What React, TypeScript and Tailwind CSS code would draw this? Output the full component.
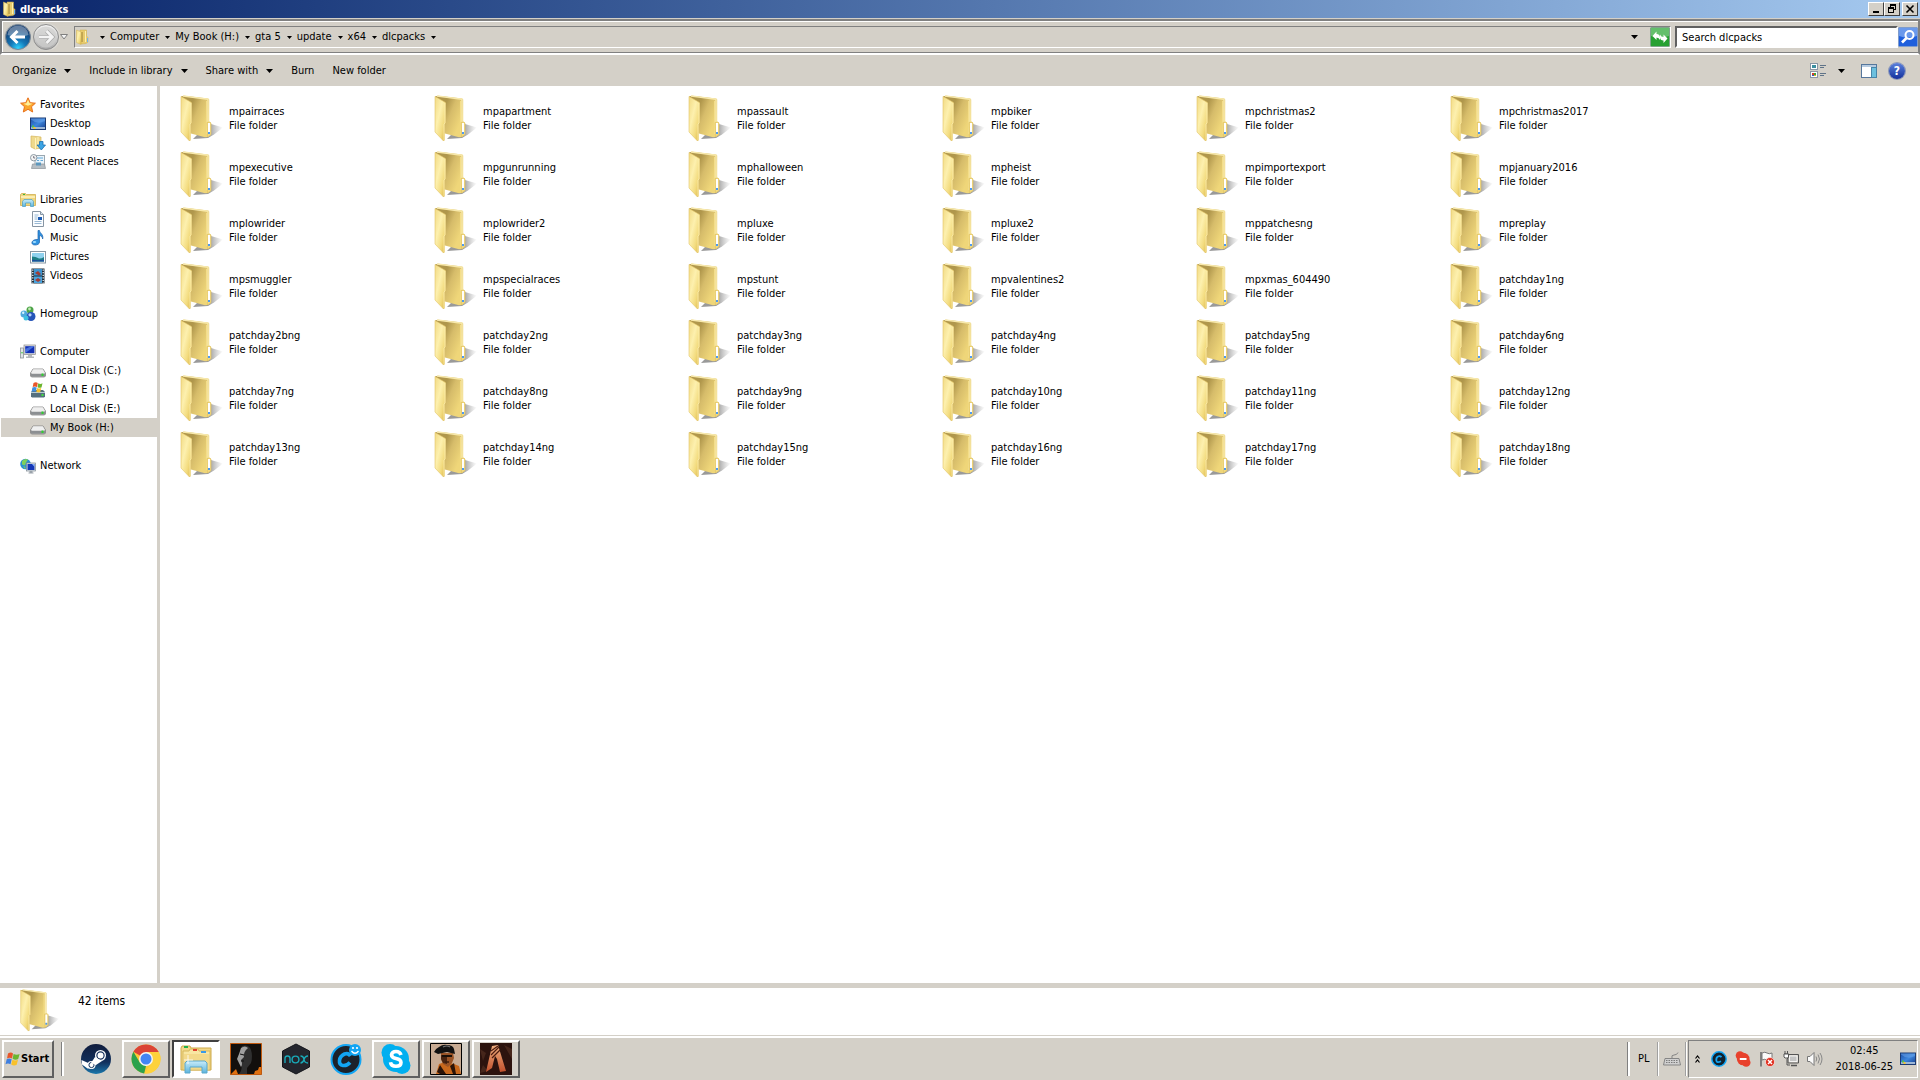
import type { ReactNode } from 'react';

interface NavItem {
  label: string;
  icon: ReactNode;
  active?: boolean;
}

interface NavGroup {
  title: string;
  icon: ReactNode;
  items: NavItem[];
}

const RAISED =
  'border-2 border-t-white border-l-white border-r-[#606060] border-b-[#606060] bg-[#d4d0c8]';

const folders = [
  'mpairraces', 'mpapartment', 'mpassault', 'mpbiker', 'mpchristmas2', 'mpchristmas2017',
  'mpexecutive', 'mpgunrunning', 'mphalloween', 'mpheist', 'mpimportexport', 'mpjanuary2016',
  'mplowrider', 'mplowrider2', 'mpluxe', 'mpluxe2', 'mppatchesng', 'mpreplay',
  'mpsmuggler', 'mpspecialraces', 'mpstunt', 'mpvalentines2', 'mpxmas_604490', 'patchday1ng',
  'patchday2bng', 'patchday2ng', 'patchday3ng', 'patchday4ng', 'patchday5ng', 'patchday6ng',
  'patchday7ng', 'patchday8ng', 'patchday9ng', 'patchday10ng', 'patchday11ng', 'patchday12ng',
  'patchday13ng', 'patchday14ng', 'patchday15ng', 'patchday16ng', 'patchday17ng', 'patchday18ng',
];

const crumbs = ['Computer', 'My Book (H:)', 'gta 5', 'update', 'x64', 'dlcpacks'];

// Gradients shared by all the icons below
function IconDefs() {
  return (
    <svg className="absolute h-0 w-0" aria-hidden="true">
      <defs>
        <linearGradient id="flap" x1="0" y1="0" x2="1" y2="1">
          <stop offset="0" stopColor="#f1da84" />
          <stop offset=".4" stopColor="#fdf0ae" />
          <stop offset=".7" stopColor="#f3dc80" />
          <stop offset="1" stopColor="#dcb646" />
        </linearGradient>
        <linearGradient id="inside" gradientUnits="userSpaceOnUse" x1="13" y1="14" x2="32" y2="22">
          <stop offset="0" stopColor="#b0974c" />
          <stop offset=".4" stopColor="#d6bc6a" />
          <stop offset="1" stopColor="#efd679" />
        </linearGradient>
        <linearGradient id="shade" gradientUnits="userSpaceOnUse" x1="32" y1="36" x2="46" y2="36">
          <stop offset="0" stopColor="#808080" stopOpacity=".8" />
          <stop offset="1" stopColor="#a0a0a0" stopOpacity="0" />
        </linearGradient>
        <radialGradient id="back" cx=".5" cy=".95" r=".8">
          <stop offset="0" stopColor="#2fd3ff" />
          <stop offset=".4" stopColor="#1478b8" />
          <stop offset="1" stopColor="#143e72" />
        </radialGradient>
        <linearGradient id="silver" x1="0" y1="0" x2="0" y2="1">
          <stop offset="0" stopColor="#f4f4f4" />
          <stop offset=".5" stopColor="#d2d2d2" />
          <stop offset="1" stopColor="#a8a8a8" />
        </linearGradient>
        <linearGradient id="screen" x1="0" y1="0" x2="1" y2="1">
          <stop offset="0" stopColor="#1c4fa8" />
          <stop offset=".5" stopColor="#3d86dd" />
          <stop offset="1" stopColor="#143a88" />
        </linearGradient>
        <linearGradient id="steam" x1="0" y1="0" x2="0" y2="1">
          <stop offset="0" stopColor="#101c3c" />
          <stop offset=".6" stopColor="#12305c" />
          <stop offset="1" stopColor="#1b78ad" />
        </linearGradient>
        <linearGradient id="glass" x1="0" y1="0" x2="0" y2="1">
          <stop offset="0" stopColor="#c8ecfa" />
          <stop offset="1" stopColor="#5cb4dc" />
        </linearGradient>
        <linearGradient id="ember" x1="0" y1="0" x2="0" y2="1">
          <stop offset="0" stopColor="#f0b080" />
          <stop offset="1" stopColor="#c0502c" />
        </linearGradient>
      </defs>
    </svg>
  );
}

function FolderIcon({ className }: { className: string }) {
  return (
    <svg className={className} viewBox="0 0 48 48" aria-hidden="true">
      <path d="M34 30l12 3.500-9 7-6 3.500-15 1 6-6z" fill="url(#shade)" />
      <path d="M4 2.500l3-.7L31 4.500l1.200 1v22l1.500 1.500v12L31 43l-3 .3-15-4z" fill="url(#inside)" />
      <path d="M6 2l25 3.200v23" fill="none" stroke="#f8e9ac" strokeWidth="1.400" />
      <path d="M29.500 7v33" stroke="#f4de8a" strokeWidth="1" />
      <path d="M30 28.500l3-.5 1 1v11.500l-3.500 2.500z" fill="#f1d984" stroke="#dfc15e" strokeWidth=".6" />
      <rect x="31" y="29" width="2" height="9" fill="#fff" />
      <rect x="31" y="38" width="2" height="2" fill="#4d9af0" />
      <path d="M4 2.500l10.500 6v20.500l-1 1V46l-1 1L4 38z" fill="url(#flap)" stroke="#e3c566" strokeWidth=".6" />
      <path d="M14 9v20l-1 1v16" fill="none" stroke="#fff3bc" strokeWidth=".7" />
    </svg>
  );
}

function SmallFolder() {
  return (
    <svg className="size-4 shrink-0" viewBox="0 0 16 16" aria-hidden="true">
      <path d="M5 1h6.500v6l1.500 1.500V13l-2 1.500L6 15z" fill="#e8cb6c" stroke="#cfae4c" strokeWidth=".5" />
      <path d="M7 3v10" stroke="#b4984a" strokeWidth="1.500" />
      <path d="M10.500 2v11" stroke="#fff0ae" strokeWidth="1" />
      <path d="M12.500 9v4" stroke="#6db3ee" strokeWidth="1" />
      <path d="M1.500 1L6 3v12.500l-4.500-2z" fill="url(#flap)" stroke="#d7b652" strokeWidth=".5" />
    </svg>
  );
}

function Icon16({ children }: { children: ReactNode }) {
  return (
    <svg className="size-4 shrink-0" viewBox="0 0 16 16" aria-hidden="true">
      {children}
    </svg>
  );
}

const DriveIcon = (
  <Icon16>
    <path d="M3 6h10l2.500 4v3l-1 1h-13l-1-1v-3z" fill="#b8b8b8" stroke="#777" strokeWidth=".7" />
    <path d="M3.200 6.300h9.600L15 10H1z" fill="#efefef" />
    <rect x="1" y="10" width="14" height="3.500" rx=".8" fill="#8c8f92" />
    <path d="M1.500 10.500h13" stroke="#d8d8d8" />
    <rect x="11.500" y="10.500" width="2" height="2.500" fill="#2fd02f" />
  </Icon16>
);

const WindowsDriveIcon = (
  <Icon16>
    <path d="M1 10l2-2h10l2 2v4.500l-1 1H2l-1-1z" fill="#55707e" />
    <path d="M1 10.500h14" stroke="#b7cbd3" />
    <rect x="11.500" y="12" width="2" height="2" fill="#3fe03f" />
    <path d="M3.500 1q2.500-1.500 4.300 0L7 5q-2.200-1.200-4.300 0z" fill="#e8562a" />
    <path d="M8.300 1.300q2 1.200 4.200 0L11.500 5.400q-2 1-4-.2z" fill="#6bb52e" />
    <path d="M2.400 5.600q2.200-1.300 4.300 0l-.8 4q-2.200-1-4.300.2z" fill="#3f8fe0" />
    <path d="M7.200 5.900q2 1.200 4 .2l-.9 4q-2 .8-4-.4z" fill="#f8c12c" />
  </Icon16>
);

const DesktopIcon = (
  <Icon16>
    <rect x=".5" y="2" width="15" height="11.500" fill="url(#screen)" stroke="#1b3a73" />
    <path d="M1 3.500Q7 9 15 5V2.500H1z" fill="#6ea8ec" opacity=".5" />
    <rect x="1" y="11" width="14" height="2" fill="#9db7d6" />
    <rect x="2" y="9.500" width="2" height="2" fill="#4fc04a" />
    <rect x="3.500" y="11" width="2" height="2" fill="#f4c430" />
  </Icon16>
);

const FavoritesIcon = (
  <Icon16>
    <path d="M8 .8l2.200 4.900 5.200.5-3.900 3.500 1.200 5.300L8 12.300 3.300 15l1.200-5.300L.6 6.200l5.200-.5z" fill="#fba62c" stroke="#e8711c" />
    <path d="M8 2.800l1.600 3.500 3 .4-4.600 2-4.600-2 3-.4z" fill="#fff09a" />
  </Icon16>
);

const DownloadsIcon = (
  <Icon16>
    <path d="M1 1l10 1v11l-6 1-4-2z" fill="#efd98c" stroke="#d5b65c" strokeWidth=".7" />
    <path d="M5.500 3v11M8 2v11" stroke="#fff3bd" />
    <path d="M9.500 6.500h3.500V10h2.500l-4.200 5L7 10h2.500z" fill="#3ba4e4" stroke="#1c6eb0" strokeWidth=".8" />
  </Icon16>
);

const RecentIcon = (
  <Icon16>
    <rect x="5" y="1.500" width="9.500" height="10" fill="#eaf4fb" stroke="#9aa7b0" />
    <path d="M7 4h6M7 6.500h2M10.500 6.500h2.500" stroke="#62a8d8" />
    <path d="M2.500 10h12l1 4.500H1.500z" fill="#b6bec4" stroke="#8c9399" strokeWidth=".7" />
    <rect x="6" y="8.500" width="5" height="3" fill="#5c97bd" />
    <circle cx="3.700" cy="3.700" r="3.200" fill="#f5f5f5" stroke="#8e9aa3" />
    <path d="M3.700 2v2h1.500" fill="none" stroke="#556" strokeWidth=".8" />
  </Icon16>
);

const LibrariesIcon = (
  <Icon16>
    <path d="M.5 2.500l1-1h4l1 1h9v11H.5z" fill="#f0d67e" stroke="#cfae4f" strokeWidth=".8" />
    <path d="M1 5h14" stroke="#fff4c4" strokeWidth="1.500" />
    <rect x="3" y="2" width="2" height="1" fill="#3eb53e" />
    <path d="M2.500 14.500V9.500l1.500-2h8l1.500 2v5h-3v-3.500h-5v3.500z" fill="url(#glass)" stroke="#4a9dc4" strokeWidth=".7" />
  </Icon16>
);

const DocumentsIcon = (
  <Icon16>
    <path d="M2.500.5h8l3 3v12h-11z" fill="#fbfdff" stroke="#8795a3" />
    <path d="M10.500.5v3h3" fill="#d7e3ee" stroke="#8795a3" />
    <path d="M4.500 4h4M4.500 6h3M4.500 8h3M4.500 10.500h7M4.500 12.500h7" stroke="#7fa6c9" strokeWidth=".8" />
    <rect x="8" y="6" width="4" height="3" fill="#1c5cb4" />
  </Icon16>
);

const MusicIcon = (
  <Icon16>
    <path d="M8 .5h1.500c.3 3 4.200 3.500 3.200 8.500C12.200 6.500 11 5.800 9.500 5.500V12c0 2-2 3-4.500 3S1.500 13.500 2 12s3-3 6-2.500z" fill="#2f92e0" stroke="#1b62ac" strokeWidth=".7" />
    <ellipse cx="4.500" cy="12" rx="1.800" ry="1" fill="#9fdcff" />
  </Icon16>
);

const PicturesIcon = (
  <Icon16>
    <rect x=".5" y="2.500" width="15" height="11.500" fill="#fff" stroke="#8997a3" />
    <rect x="2" y="4" width="12" height="8.500" fill="#8fd1ee" />
    <path d="M2 7.500q4 0 6 1.500t6-1v4.500H2z" fill="#1d7f85" />
    <path d="M2 10.500q6 1.500 12 0v2H2z" fill="#1c4f9c" />
  </Icon16>
);

const VideosIcon = (
  <Icon16>
    <rect x="1.500" y=".5" width="13" height="15" fill="#20303c" />
    <rect x="4" y="1" width="8" height="6.500" fill="#3c93d0" />
    <rect x="4" y="8.500" width="8" height="6.500" fill="#4aa4de" />
    <path d="M5 5l3-2 3 3-2 1.500zM5 12l3-2 3 2-3 2z" fill="#a13c34" />
    <path d="M2.800 1.500v14M13.200 1.500v14" stroke="#fff" strokeWidth="1.200" strokeDasharray="1.200 1.400" />
  </Icon16>
);

const HomegroupIcon = (
  <Icon16>
    <circle cx="4" cy="8" r="3.500" fill="#4fa9dc" />
    <circle cx="10" cy="4" r="3.500" fill="#4da348" />
    <circle cx="11" cy="10.500" r="4.500" fill="#2554b8" />
    <circle cx="6" cy="12" r="2.500" fill="#3ec0e0" />
    <circle cx="9.500" cy="3" r="1.400" fill="#c1ecb4" />
    <circle cx="10" cy="8.800" r="1.600" fill="#b4d2fb" />
    <circle cx="3.200" cy="6.800" r="1.200" fill="#d4f2ff" />
  </Icon16>
);

const ComputerIcon = (
  <Icon16>
    <rect x=".5" y="4" width="3" height="10" fill="#dfe3e6" stroke="#8c9399" strokeWidth=".8" />
    <rect x="1.300" y="8" width="1.400" height="1.400" fill="#4cd04c" />
    <rect x="4" y="1" width="11.500" height="9.500" fill="#e3e3e3" stroke="#8c8c8c" strokeWidth=".7" />
    <rect x="5.200" y="2.200" width="9.200" height="7" fill="#1330b4" />
    <path d="M5.200 9.200V5l6-2.800h3.200z" fill="#5c8cf0" opacity=".7" />
    <path d="M8 11h4v1.500h2V14H6v-1.500h2z" fill="#b4b8bc" />
  </Icon16>
);

const NetworkIcon = (
  <Icon16>
    <circle cx="5.500" cy="6" r="5.300" fill="#2a8fd4" />
    <path d="M2 3q3-3 6-1.500l-2 3-1 3-3-1zM3 8l2.500 1L5 11z" fill="#7fd05a" />
    <rect x="6.500" y="5" width="9" height="8" fill="#dce4ec" stroke="#7d8791" strokeWidth=".7" />
    <rect x="7.500" y="6" width="7" height="6" fill="#1537b8" />
    <path d="M12 6h2.500v3z" fill="#8ab4f8" />
    <path d="M9.500 13h3v1.500h1v1h-5v-1h1z" fill="#9aa2aa" />
  </Icon16>
);

const navGroups: NavGroup[] = [
  {
    title: 'Favorites',
    icon: FavoritesIcon,
    items: [
      { label: 'Desktop', icon: DesktopIcon },
      { label: 'Downloads', icon: DownloadsIcon },
      { label: 'Recent Places', icon: RecentIcon },
    ],
  },
  {
    title: 'Libraries',
    icon: LibrariesIcon,
    items: [
      { label: 'Documents', icon: DocumentsIcon },
      { label: 'Music', icon: MusicIcon },
      { label: 'Pictures', icon: PicturesIcon },
      { label: 'Videos', icon: VideosIcon },
    ],
  },
  { title: 'Homegroup', icon: HomegroupIcon, items: [] },
  {
    title: 'Computer',
    icon: ComputerIcon,
    items: [
      { label: 'Local Disk (C:)', icon: DriveIcon },
      { label: 'D A N E (D:)', icon: WindowsDriveIcon },
      { label: 'Local Disk (E:)', icon: DriveIcon },
      { label: 'My Book (H:)', icon: DriveIcon, active: true },
    ],
  },
  { title: 'Network', icon: NetworkIcon, items: [] },
];

function Caret({ small }: { small?: boolean }) {
  return (
    <svg className={small ? 'h-[3px] w-[5px]' : 'h-1 w-[7px]'} viewBox="0 0 7 4" preserveAspectRatio="none" aria-hidden="true">
      <path d="M0 0h7L3.500 4z" />
    </svg>
  );
}

function TitleBar() {
  const button = 'flex h-3.5 w-4 items-center justify-center border border-t-white border-l-white border-r-[#404040] border-b-[#404040] bg-[#d4d0c8]';
  return (
    <header className="flex h-[18px] items-center bg-linear-to-r from-[#0a246a] to-[#a6caf0] pr-0.5 pl-0.5">
      <SmallFolder />
      <h1 className="ml-0.5 flex-1 pt-px text-[11px] font-bold text-white">dlcpacks</h1>
      <button className={button} aria-label="Minimize">
        <svg className="h-2.5 w-3" viewBox="0 0 12 10"><path d="M3 7h6v2H3z" /></svg>
      </button>
      <button className={button} aria-label="Restore">
        <svg className="h-2.5 w-3" viewBox="0 0 12 10" shapeRendering="crispEdges">
          <path d="M4 0h6v6H8V5h1V2H5v1H4zM2 3h6v6H2zm1 2v3h4V5z" fillRule="evenodd" />
        </svg>
      </button>
      <button className={`${button} ml-0.5`} aria-label="Close">
        <svg className="h-2.5 w-3" viewBox="0 0 12 10"><path d="M2.500 1.500l7 7M9.500 1.500l-7 7" stroke="#000" strokeWidth="1.600" /></svg>
      </button>
    </header>
  );
}

function AddressBar() {
  return (
    <div className="mt-px flex h-9 items-center border-2 border-t-[#808080] border-r-[#808080] border-b-white border-l-[#808080] pl-0.5 shadow-[inset_0_-1px_0_#808080,inset_1px_1px_0_#fff]">
      <div className="flex items-center rounded-full bg-linear-to-r from-[#c4c4c0] to-[#dedcd6]">
        <button aria-label="Back">
          <svg className="block size-7" viewBox="0 0 28 28">
            <circle cx="14" cy="14" r="12.500" fill="url(#back)" stroke="#7b8794" />
            <path d="M3.500 12a10.500 9.500 0 0 1 21 0q-10 4-21 0z" fill="#fff" opacity=".35" />
            <path d="M13.500 8L7.500 14l6 6M8 14h13" fill="none" stroke="#fff" strokeWidth="3" />
          </svg>
        </button>
        <button aria-label="Forward">
          <svg className="block size-7" viewBox="0 0 28 28">
            <circle cx="14" cy="14" r="12.500" fill="url(#silver)" stroke="#8c8c8c" />
            <circle cx="14" cy="14" r="10.500" fill="#cfcfcd" opacity=".7" />
            <path d="M14.500 8l6 6-6 6M20 14H7" fill="none" stroke="#a8a8a8" strokeWidth="4" />
            <path d="M14.500 8l6 6-6 6M20 14H7" fill="none" stroke="#f4f4f4" strokeWidth="2.600" />
          </svg>
        </button>
      </div>
      <button className="mr-1.5 w-2" aria-label="Recent pages">
        <svg className="block h-1.5 w-2" viewBox="0 0 8 6"><path d="M.5.500h7L4 5z" fill="#f4f4f4" stroke="#808080" /></svg>
      </button>
      <nav className="flex h-[22px] flex-1 items-center border border-t-[#808080] border-r-white border-b-white border-l-[#808080]" aria-label="Address">
        <SmallFolder />
        <span className="ml-[9px]"><Caret small /></span>
        {crumbs.map((crumb) => (
          <span key={crumb} className="flex items-center">
            <a href="#" className="mr-1.5 ml-[5px]">{crumb}</a>
            <Caret small />
          </span>
        ))}
        <button className="ml-auto px-3" aria-label="Previous locations"><Caret /></button>
        <button className="size-5" aria-label="Refresh">
          <svg className="block size-5" viewBox="0 0 20 20">
            <rect x=".5" y=".5" width="19" height="19" rx="1" fill="#27a032" stroke="#7ea48a" />
            <path d="M1 1h18v8Q10 12 1 9z" fill="#8ed492" opacity=".6" />
            <path d="M2.500 9L6.500 4.500V7q3.500 0 3.500 3.500V13Q9 10.500 6.500 10.500V13z" fill="#fff" />
            <path d="M17.500 11.500l-4 4.500V13.500q-3.500 0-3.500-3.500V7.500q1 2.500 3.500 2.500V7.500z" fill="#fff" />
          </svg>
        </button>
      </nav>
      <form className="ml-1 flex items-center" role="search">
        <input
          type="search"
          aria-label="Search dlcpacks"
          placeholder="Search dlcpacks"
          className="h-[22px] w-[223px] border-2 border-t-[#606060] border-r-white border-b-white border-l-[#606060] bg-white px-[5px] text-[11px] outline-none placeholder:text-black"
        />
        <button type="button" aria-label="Search" className="size-5">
          <svg className="block size-5" viewBox="0 0 20 20">
            <rect x=".5" y=".5" width="19" height="19" rx="1" fill="#1f5fdc" stroke="#7f9ccc" />
            <path d="M1 1h18v8Q10 12 1 9z" fill="#9cc0f6" opacity=".6" />
            <circle cx="11.500" cy="8" r="4" fill="none" stroke="#fff" strokeWidth="2" />
            <path d="M8.500 11L4 15.500" stroke="#fff" strokeWidth="2.600" />
          </svg>
        </button>
      </form>
    </div>
  );
}

function CommandBar() {
  return (
    <div className="flex h-[31px] items-center pr-[15px] pl-3">
      <div className="flex flex-1 items-center gap-[18px]">
        {['Organize', 'Include in library', 'Share with'].map((label) => (
          <button key={label} className="flex items-center gap-2">
            {label}
            <Caret />
          </button>
        ))}
        <button>Burn</button>
        <button>New folder</button>
      </div>
      <button aria-label="Change your view" className="mr-3">
        <svg className="block size-4" viewBox="0 0 16 16" shapeRendering="crispEdges">
          <path d="M.5.500h7v6h-7zM.5 8.500h7v6h-7z" fill="#fff" stroke="#8b97a5" />
          <path d="M2 2h4v3H2z" fill="#3c8fa0" />
          <path d="M2 10h2v2H2z" fill="#d43c2c" /><path d="M4 10h2v2H4z" fill="#3ca43c" />
          <path d="M2 12h2v1H2z" fill="#2c5cc4" /><path d="M4 12h2v1H4z" fill="#e8b41c" />
          <path d="M10 2.500h6M10 4.500h4M10 10.500h6M10 12.500h4" stroke="#5f7388" />
        </svg>
      </button>
      <button aria-label="More options"><Caret /></button>
      <button aria-label="Show the preview pane" className="mr-3 ml-4">
        <svg className="block size-4" viewBox="0 0 16 16" shapeRendering="crispEdges">
          <path d="M.5 1.500h15v13H.5z" fill="#fff" stroke="#56779c" />
          <path d="M1 2h14v2H1z" fill="#b7cbe0" />
          <path d="M10 4h5v10h-5z" fill="#6cc0de" stroke="#4785a8" />
        </svg>
      </button>
      <button aria-label="Get help" className="flex size-4 items-center justify-center rounded-full bg-linear-to-b from-[#5c80dc] to-[#162f9c] text-[12px] font-bold text-white ring-1 ring-[#8c98b8]">
        ?
      </button>
    </div>
  );
}

function Sidebar() {
  return (
    <nav className="flex w-40 shrink-0 flex-col gap-[19px] border-r-3 border-[#d4d0c8] pt-[9px] pl-px" aria-label="Folders">
      {navGroups.map((group) => (
        <section key={group.title}>
          <a href="#" className="flex h-[19px] items-center gap-1 pt-px pl-[19px]">
            {group.icon}
            {group.title}
          </a>
          {group.items.map((item) => (
            <a
              key={item.label}
              href="#"
              className={`flex h-[19px] items-center gap-1 pt-px pl-[29px] ${item.active ? 'bg-[#d4d0c8]' : ''}`}
            >
              {item.icon}
              {item.label}
            </a>
          ))}
        </section>
      ))}
    </nav>
  );
}

function FolderGrid() {
  return (
    <main className="flex-1 pt-1 pl-[17px]">
      <ul className="grid grid-cols-[repeat(auto-fill,254px)]">
        {folders.map((name) => (
          <li key={name} className="flex h-14 items-center gap-1">
            <FolderIcon className="size-12 shrink-0" />
            <div className="pt-0.5 leading-[14px]">
              <p>{name}</p>
              <p>File folder</p>
            </div>
          </li>
        ))}
      </ul>
    </main>
  );
}

const apps = [
  {
    name: 'Steam',
    icon: (
      <>
        <circle cx="16" cy="16" r="15" fill="url(#steam)" />
        <path d="M1.500 17l9 4 5.500-4 2 1.500-5 7-5.500 0-5.500-4z" fill="#fff" />
        <circle cx="11.500" cy="22" r="4" fill="#fff" />
        <circle cx="11.500" cy="22" r="2.600" fill="none" stroke="#16345e" />
        <circle cx="20.500" cy="12.500" r="5.500" fill="#fff" />
        <circle cx="20.500" cy="12.500" r="3.600" fill="none" stroke="#16305c" strokeWidth="1.200" />
        <path d="M15 14l-4 6 5 2 6-4z" fill="#fff" />
      </>
    ),
  },
  {
    name: 'Google Chrome',
    open: true,
    icon: (
      <>
        <circle cx="16" cy="16" r="14.500" fill="#fbc934" />
        <path d="M16 16L3.400 8.800A14.500 14.500 0 0 1 28.700 9H16z" fill="#db4437" />
        <path d="M3.400 8.800L9.800 19.500 16 23l-1.800 7.400A14.500 14.500 0 0 1 3.400 8.800z" fill="#2ba24c" />
        <path d="M16 9h12.700A14.500 14.500 0 0 1 14.200 30.400L22.200 19.500z" fill="#fdd23c" />
        <circle cx="16" cy="16" r="7" fill="#f4f4f4" />
        <circle cx="16" cy="16" r="5.500" fill="#4285f4" />
      </>
    ),
  },
  {
    name: 'Windows Explorer',
    active: true,
    icon: (
      <>
        <path d="M1 5l1-2h8l1 2h20v22H1z" fill="#f0d88a" stroke="#cda94a" />
        <path d="M3 8h6l1-2h8l1 2h11v19H3z" fill="#f8e6a2" stroke="#d8b85c" />
        <path d="M4 11h25v15H4z" fill="#f3d98a" />
        <rect x="4" y="3" width="4" height="2" fill="#22b14c" />
        <rect x="13" y="6" width="4" height="2" fill="#e0402c" />
        <rect x="21" y="8" width="5" height="2" fill="#3a9ae8" />
        <path d="M5 30V20l2-2h18l2 2v10h-5v-6H10v6z" fill="url(#glass)" stroke="#5aa8cc" />
        <path d="M8 12v9M4 17h9" stroke="#fff" strokeWidth=".8" />
      </>
    ),
  },
  {
    name: 'Hitman',
    icon: (
      <>
        <path d="M.5.500h31v31H.5z" fill="#120f0d" stroke="#c0590f" />
        <path d="M12 3q7-2 9 4t0 13l-4 5v6H9q4-5 2-9-3-1-2-4l-1-3 2-5z" fill="#303030" />
        <path d="M11 5q4-3 7 0-5 4-4 9l-3 3q2 4 0 7l-2-4-2-4 2-5z" fill="#a0a0a0" />
        <path d="M10 11l4 1M11 18l3 0" stroke="#111" />
        <path d="M1 31l5-5 2 5zM24 31l1-3 3-1 1-3h2v7z" fill="#e07010" />
      </>
    ),
  },
  {
    name: 'Nox',
    icon: (
      <>
        <path d="M16 1l13.500 7v16L16 31 2.500 24V8z" fill="#24252d" stroke="#14151b" />
        <path d="M5 20v-4.500a2.500 2.500 0 0 1 5 0V20M20.500 13q3 0 3.500 3.500t4 3.500M28 13q-3 0-4 3.500T20.500 20" fill="none" stroke="#19a9b8" strokeWidth="1.400" />
        <circle cx="15.500" cy="16.500" r="3.400" fill="none" stroke="#19a9b8" strokeWidth="1.400" />
      </>
    ),
  },
  {
    name: 'Cyberfoto',
    icon: (
      <>
        <circle cx="16" cy="16.500" r="14.500" fill="#1c222b" stroke="#12a5f4" strokeWidth="2" />
        <path d="M20.500 13q-2-3.500-6-2-4.500 2-5 6.500t3.500 5q4 .5 7-3" fill="none" stroke="#12a5f4" strokeWidth="3.600" />
        <circle cx="25" cy="7" r="6" fill="#12a5f4" />
        <circle cx="23" cy="5" r="1.100" fill="#fff" /><circle cx="27" cy="5" r="1.100" fill="#fff" />
        <path d="M21.500 8q3.500 4.500 7 0" fill="none" stroke="#fff" strokeWidth="1.300" />
      </>
    ),
  },
  {
    name: 'Skype',
    open: true,
    icon: (
      <>
        <circle cx="10" cy="9.500" r="8.500" fill="#00aff0" />
        <circle cx="22" cy="22.500" r="8.500" fill="#00aff0" />
        <circle cx="16" cy="16" r="13" fill="#00aff0" />
        <path d="M21 12q-1-3.500-5-3.500t-4.500 3.200q0 2.800 4.500 3.800 5 1 5 4 0 3.700-5 3.700t-5.500-4" fill="none" stroke="#fff" strokeWidth="3.600" />
      </>
    ),
  },
  {
    name: 'GTA San Andreas',
    open: true,
    icon: (
      <>
        <path d="M.5.500h31v31H.5z" fill="#c8ab93" />
        <path d="M6 31l3-10 6-2 9 2 5 2 2 8z" fill="#c8681c" />
        <path d="M10 22l6 9h-6l-3-2zM24 20l2 11h-3l-3-8z" fill="#2c1408" />
        <path d="M11 10h12l1 5-2 5-4 4-5-3-2-5z" fill="#9a5426" />
        <path d="M11 12l6 1v8l-4-1-2-4z" fill="#4a2410" />
        <path d="M12 12h10v2H12z" fill="#1a1008" />
        <path d="M4 9q1-3 5-5 4-3 8-2 6 0 7 4l1 5-8-2-9 2z" fill="#111" />
        <path d="M13 4q4-2 7 0" fill="none" stroke="#777" strokeWidth="1.200" />
        <path d="M15 19l4 0" stroke="#3c1c0c" strokeWidth="1.500" />
        <path d="M.5.500h31v31H.5z" fill="none" stroke="#000" />
      </>
    ),
  },
  {
    name: 'Alien Shooter',
    open: true,
    icon: (
      <>
        <path d="M0 0h32v32H0z" fill="#2c130e" />
        <path d="M0 6l6 4-3 8zM24 2l8 4v10zM3 22l5 6-8 2z" fill="#46261b" />
        <path d="M12 3l6-1 8 26-6 1-3-13-2-3-3 12-6 4 2-9z" fill="url(#ember)" />
        <path d="M11 12l8-8M12 15l8-8M11 8l7-5" stroke="#4c1c10" strokeWidth="1.200" />
      </>
    ),
  },
];

const ETCHED = 'w-[3px] border-l border-l-[#808080] border-r-2 border-r-white';

function Taskbar() {
  return (
    <footer className="flex h-11 items-center border-t-2 border-white bg-[#d4d0c8] py-px pr-0.5 pl-0.5">
      <button className={`${RAISED} flex h-[38px] items-center pr-[3px] pl-px text-[11px] font-bold`}>
        <svg className="size-4" viewBox="0 0 16 16" aria-hidden="true">
          <path d="M3 2.500q3-2 5 0L7 7.500q-2.500-1.500-5 0z" fill="#e8562a" />
          <path d="M8.600 3q3 1.500 6 0L13.200 8q-2.800 1.500-5.600-.2z" fill="#6bb52e" />
          <path d="M1.700 8.300q2.500-1.500 5 0l-1.200 4.900q-2.500-1.500-5 0z" fill="#3f7fe0" />
          <path d="M7.400 8.700q2.800 1.500 5.600 0l-1.300 5q-2.800 1.500-5.500-.2z" fill="#f8c12c" />
        </svg>
        Start
      </button>
      <div className={`${ETCHED} mr-2 ml-[7px] h-[34px]`} />
      <div className="flex gap-0.5">
        {apps.map((app) => (
          <button
            key={app.name}
            aria-label={app.name}
            className={`flex h-[38px] w-12 items-center justify-center border-2 ${
              app.active
                ? 'border-t-[#404040] border-r-white border-b-white border-l-[#404040] bg-white'
                : app.open
                  ? 'border-t-white border-r-[#606060] border-b-[#606060] border-l-white'
                  : 'border-transparent'
            }`}
          >
            <svg className="size-8" viewBox="0 0 32 32" aria-hidden="true">{app.icon}</svg>
          </button>
        ))}
      </div>
      <div className="ml-auto flex h-[38px] items-center">
        <div className={`${ETCHED} h-[34px]`} />
        <button className="px-2">PL</button>
        <div className="h-[34px] w-0.5 border-l border-l-[#a0a0a0] bg-white" />
        <button className="px-1" aria-label="Keyboard">
          <svg className="block h-4 w-[18px]" viewBox="0 0 18 16">
            <path d="M2 7.500h14l1.500 6.500H.5z" fill="#d0d0d0" stroke="#858585" />
            <path d="M3 9.500h12M3 11.500h12" stroke="#7c7c7c" strokeDasharray="1.500 1" />
            <path d="M9 7q-1-3 2-3t4-2.500" fill="none" stroke="#858585" />
          </svg>
        </button>
        <div className="mr-px h-[34px] w-0.5 border-l border-l-[#a0a0a0] bg-white" />
        <div className="flex h-[38px] items-center border border-t-[#808080] border-r-white border-b-white border-l-[#808080] pr-px pl-1.5">
          <button aria-label="Show hidden icons">
            <svg className="block h-2 w-[5px]" viewBox="0 0 5 8"><path d="M.5 3.500l2-2.500 2 2.500M.5 7.500l2-2.500 2 2.500" fill="none" stroke="#000" strokeWidth="1.200" /></svg>
          </button>
          <div className="ml-[11px] flex gap-2">
            <Icon16>
              <circle cx="8" cy="8" r="7.200" fill="#12222e" stroke="#12a5f4" strokeWidth="1.500" />
              <path d="M10.500 6.200Q9 4.500 7 5.500T5.300 9.500t4.700.7" fill="none" stroke="#12a5f4" strokeWidth="1.800" />
            </Icon16>
            <Icon16>
              <circle cx="5" cy="4.500" r="4.300" fill="#e8412c" />
              <circle cx="11.200" cy="11.500" r="4.300" fill="#e8412c" />
              <circle cx="8.200" cy="8" r="6.300" fill="#e8412c" />
              <rect x="4.800" y="7" width="6.700" height="2" fill="#fff" />
            </Icon16>
            <Icon16>
              <path d="M2 1v14.500" stroke="#777" strokeWidth="1.800" />
              <path d="M3 2q3-1.500 5 0t5 0v7q-3 1.500-5 0t-5 0z" fill="#fafafa" stroke="#777" />
              <circle cx="11" cy="11" r="4.500" fill="#e02c1c" stroke="#fff" strokeWidth=".6" />
              <path d="M9 9l4 4M13 9l-4 4" stroke="#fff" strokeWidth="1.500" />
            </Icon16>
            <Icon16>
              <path d="M5 3.500h10.500v8.500H5z" fill="#d4d0c8" stroke="#555" />
              <path d="M6.500 5h7.500v5.500H6.500z" fill="#c4c4c4" stroke="#fff" strokeWidth=".8" />
              <path d="M8 14.500h6" stroke="#555" strokeWidth="1.500" />
              <path d="M1 3h4.500v3.500L4 8v6h3M2 0v3M4.500 0v3" fill="none" stroke="#555" />
              <path d="M1 3h4.500v3l-1 1H2L1 6z" fill="#fff" stroke="#555" />
            </Icon16>
            <Icon16>
              <path d="M.5 5.500h2.500L7 1.500v13L3 10.500H.500z" fill="#fbfbfb" stroke="#777" />
              <path d="M9 5.500q1.500 2.500 0 5M11 3.500q3 4.500 0 9M13 2q4 6 0 12" fill="none" stroke="#888" />
            </Icon16>
          </div>
          <time className="mr-[7px] ml-3 text-center text-[11px] leading-4">
            02:45
            <br />
            2018-06-25
          </time>
          <button aria-label="Show desktop">{DesktopIcon}</button>
        </div>
      </div>
    </footer>
  );
}

export default function App() {
  return (
    <div className="flex h-screen flex-col overflow-hidden bg-[#d4d0c8] font-['DejaVu_Sans_Condensed','Noto_Sans',sans-serif] text-[11px] leading-[14px] whitespace-nowrap text-black">
      <IconDefs />
      <TitleBar />
      <AddressBar />
      <CommandBar />
      <div className="flex min-h-0 flex-1 bg-white">
        <Sidebar />
        <FolderGrid />
      </div>
      <div className="flex h-[53px] items-start border-t-5 border-b border-[#d4d0c8] bg-white pl-[17px]">
        <FolderIcon className="size-11" />
        <p className="mt-1.5 ml-[17px] text-[12px]">42 items</p>
      </div>
      <Taskbar />
    </div>
  );
}
